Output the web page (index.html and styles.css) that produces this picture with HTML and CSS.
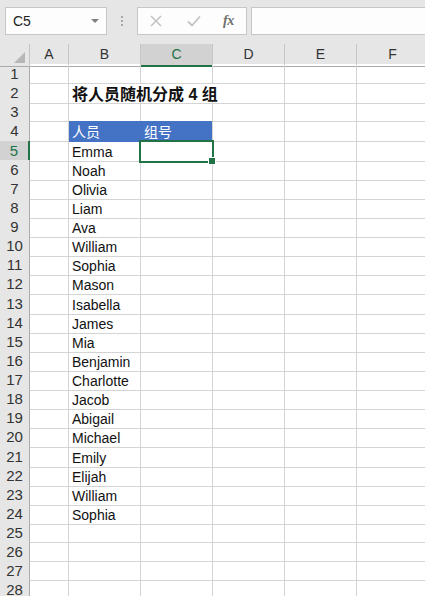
FILE: index.html
```html
<!DOCTYPE html>
<html lang="zh">
<head>
<meta charset="utf-8">
<title>Sheet</title>
<link rel="stylesheet" href="styles.css">
</head>
<body>
<div class="toolbar">
  <div class="namebox"><span class="nb-text">C5</span><span class="nb-arrow"></span></div>
  <div class="dots"><i></i><i></i><i></i></div>
  <div class="fnbox">
    <svg class="ic-x" width="12" height="12" viewBox="0 0 12 12"><path d="M1 1L11 11M11 1L1 11" stroke="#c3c3c3" stroke-width="1.6" fill="none"/></svg>
    <svg class="ic-ok" width="14" height="12" viewBox="0 0 14 12"><path d="M1 6.5L5 10.5L13 1.5" stroke="#c3c3c3" stroke-width="1.8" fill="none"/></svg>
    <span class="ic-fx">fx</span>
  </div>
  <div class="formula"></div>
</div>
<div class="sheet">
  <div class="row hdr">
    <div class="corner"><span class="tri"></span></div>
    <div class="ch">A</div><div class="ch">B</div><div class="ch sel">C</div><div class="ch">D</div><div class="ch">E</div><div class="ch">F</div>
  </div>
  <div class="row"><div class="rh">1</div><div class="c"></div><div class="c"></div><div class="c"></div><div class="c"></div><div class="c"></div><div class="c"></div></div>
  <div class="row"><div class="rh">2</div><div class="c"></div><div class="c title nob">将人员随机分成 4 组</div><div class="c nob"></div><div class="c"></div><div class="c"></div><div class="c"></div></div>
  <div class="row"><div class="rh">3</div><div class="c"></div><div class="c"></div><div class="c"></div><div class="c"></div><div class="c"></div><div class="c"></div></div>
  <div class="row"><div class="rh">4</div><div class="c"></div><div class="c fill fill-l">人员</div><div class="c fill">组号</div><div class="c"></div><div class="c"></div><div class="c"></div></div>
  <div class="row"><div class="rh rsel">5</div><div class="c"></div><div class="c">Emma</div><div class="c active"></div><div class="c"></div><div class="c"></div><div class="c"></div></div>
  <div class="row"><div class="rh">6</div><div class="c"></div><div class="c">Noah</div><div class="c"></div><div class="c"></div><div class="c"></div><div class="c"></div></div>
  <div class="row"><div class="rh">7</div><div class="c"></div><div class="c">Olivia</div><div class="c"></div><div class="c"></div><div class="c"></div><div class="c"></div></div>
  <div class="row"><div class="rh">8</div><div class="c"></div><div class="c">Liam</div><div class="c"></div><div class="c"></div><div class="c"></div><div class="c"></div></div>
  <div class="row"><div class="rh">9</div><div class="c"></div><div class="c">Ava</div><div class="c"></div><div class="c"></div><div class="c"></div><div class="c"></div></div>
  <div class="row"><div class="rh">10</div><div class="c"></div><div class="c">William</div><div class="c"></div><div class="c"></div><div class="c"></div><div class="c"></div></div>
  <div class="row"><div class="rh">11</div><div class="c"></div><div class="c">Sophia</div><div class="c"></div><div class="c"></div><div class="c"></div><div class="c"></div></div>
  <div class="row"><div class="rh">12</div><div class="c"></div><div class="c">Mason</div><div class="c"></div><div class="c"></div><div class="c"></div><div class="c"></div></div>
  <div class="row"><div class="rh">13</div><div class="c"></div><div class="c">Isabella</div><div class="c"></div><div class="c"></div><div class="c"></div><div class="c"></div></div>
  <div class="row"><div class="rh">14</div><div class="c"></div><div class="c">James</div><div class="c"></div><div class="c"></div><div class="c"></div><div class="c"></div></div>
  <div class="row"><div class="rh">15</div><div class="c"></div><div class="c">Mia</div><div class="c"></div><div class="c"></div><div class="c"></div><div class="c"></div></div>
  <div class="row"><div class="rh">16</div><div class="c"></div><div class="c">Benjamin</div><div class="c"></div><div class="c"></div><div class="c"></div><div class="c"></div></div>
  <div class="row"><div class="rh">17</div><div class="c"></div><div class="c">Charlotte</div><div class="c"></div><div class="c"></div><div class="c"></div><div class="c"></div></div>
  <div class="row"><div class="rh">18</div><div class="c"></div><div class="c">Jacob</div><div class="c"></div><div class="c"></div><div class="c"></div><div class="c"></div></div>
  <div class="row"><div class="rh">19</div><div class="c"></div><div class="c">Abigail</div><div class="c"></div><div class="c"></div><div class="c"></div><div class="c"></div></div>
  <div class="row"><div class="rh">20</div><div class="c"></div><div class="c">Michael</div><div class="c"></div><div class="c"></div><div class="c"></div><div class="c"></div></div>
  <div class="row"><div class="rh">21</div><div class="c"></div><div class="c">Emily</div><div class="c"></div><div class="c"></div><div class="c"></div><div class="c"></div></div>
  <div class="row"><div class="rh">22</div><div class="c"></div><div class="c">Elijah</div><div class="c"></div><div class="c"></div><div class="c"></div><div class="c"></div></div>
  <div class="row"><div class="rh">23</div><div class="c"></div><div class="c">William</div><div class="c"></div><div class="c"></div><div class="c"></div><div class="c"></div></div>
  <div class="row"><div class="rh">24</div><div class="c"></div><div class="c">Sophia</div><div class="c"></div><div class="c"></div><div class="c"></div><div class="c"></div></div>
  <div class="row"><div class="rh">25</div><div class="c"></div><div class="c"></div><div class="c"></div><div class="c"></div><div class="c"></div><div class="c"></div></div>
  <div class="row"><div class="rh">26</div><div class="c"></div><div class="c"></div><div class="c"></div><div class="c"></div><div class="c"></div><div class="c"></div></div>
  <div class="row"><div class="rh">27</div><div class="c"></div><div class="c"></div><div class="c"></div><div class="c"></div><div class="c"></div><div class="c"></div></div>
  <div class="row"><div class="rh">28</div><div class="c"></div><div class="c"></div><div class="c"></div><div class="c"></div><div class="c"></div><div class="c"></div></div>
</div>
</body>
</html>
```
FILE: styles.css
```css
* { box-sizing: border-box; }
html, body { margin: 0; padding: 0; }
body {
  width: 425px;
  height: 596px;
  overflow: hidden;
  background: #fff;
  font-family: "Liberation Sans", "Noto Sans CJK SC", sans-serif;
  font-size: 14px;
  color: #1a1a1a;
}
.toolbar {
  height: 44px;
  background: #e6e6e6;
  display: flex;
  align-items: flex-start;
  padding-top: 7px;
}
.namebox {
  margin-left: 5px;
  width: 102px;
  height: 28px;
  background: #fdfdfd;
  border: 1px solid #c6c6c6;
  display: flex;
  align-items: center;
  justify-content: space-between;
  padding: 0 7px 0 7px;
}
.nb-text { color: #222; font-size: 14px; }
.nb-arrow {
  width: 0; height: 0;
  border-left: 4px solid transparent;
  border-right: 4px solid transparent;
  border-top: 4px solid #808080;
}
.dots {
  width: 30px;
  height: 28px;
  display: flex;
  flex-direction: column;
  align-items: center;
  justify-content: center;
  gap: 2px;
}
.dots i { display: block; width: 2px; height: 2px; background: #a8a8a8; }
.fnbox {
  width: 110px;
  height: 28px;
  background: #fdfdfd;
  border: 1px solid #c6c6c6;
  display: flex;
  align-items: center;
  padding-left: 12px;
}
.ic-x { margin-right: 25px; }
.ic-ok { margin-right: 22px; }
.ic-fx {
  font-family: "Liberation Serif", serif;
  font-style: italic;
  font-weight: bold;
  font-size: 14px;
  color: #707070;
  letter-spacing: -0.5px;
}
.formula {
  margin-left: 4px;
  flex: 1;
  height: 28px;
  background: #fdfdfd;
  border: 1px solid #c6c6c6;
  border-right: none;
}
.sheet { display: flex; flex-direction: column; }
.row {
  display: grid;
  grid-template-columns: 30px 39px 72px 72px 72px 72px 72px;
  height: 19.14px;
}
.row.hdr { height: 20px; background: #e6e6e6; }
.corner {
  position: relative;
  border-right: 1px solid #c4c4c4;
  border-bottom: 1px solid #ababab;
}
.tri {
  position: absolute;
  right: 4px;
  bottom: 3px;
  width: 0; height: 0;
  border-left: 11px solid transparent;
  border-bottom: 11px solid #b7b7b7;
}
.ch {
  text-align: center;
  line-height: 21px;
  color: #333;
  border-right: 1px solid #c6c6c6;
  border-bottom: 1px solid #ababab;
}
.ch.sel {
  background: #d2d2d2;
  color: #217346;
  border-bottom: 2px solid #217346;
}
.rh {
  background: #e6e6e6;
  text-align: center;
  line-height: 19px;
  color: #333;
  font-size: 15px;
  border-right: 1px solid #ababab;
  border-bottom: 1px solid #d0d0d0;
}
.rh.rsel {
  background: #d2d2d2;
  color: #217346;
  border-right: 2px solid #217346;
}
.c {
  border-right: 1px solid #d4d4d4;
  border-bottom: 1px solid #d4d4d4;
  padding-left: 3px;
  padding-top: 3px;
  line-height: 17px;
  white-space: nowrap;
  overflow: visible;
  color: #111;
}
.c.nob { border-right-color: transparent; }
.c.title {
  font-weight: bold;
  font-size: 16px;
  position: relative;
  z-index: 1;
  color: #111;
}
.c.fill {
  background: #4472c4;
  color: #fff;
  border-bottom-color: #4472c4;
}
.c.fill-l { border-right-color: #4472c4; }
.c.active { position: relative; }
.c.active::after {
  content: "";
  position: absolute;
  left: -2px;
  top: -1px;
  right: -2px;
  bottom: -2px;
  border: 2px solid #217346;
}
.c.active::before {
  content: "";
  position: absolute;
  right: -4px;
  bottom: -4px;
  width: 6px;
  height: 6px;
  background: #217346;
  border: 1px solid #fff;
  z-index: 2;
}
```
